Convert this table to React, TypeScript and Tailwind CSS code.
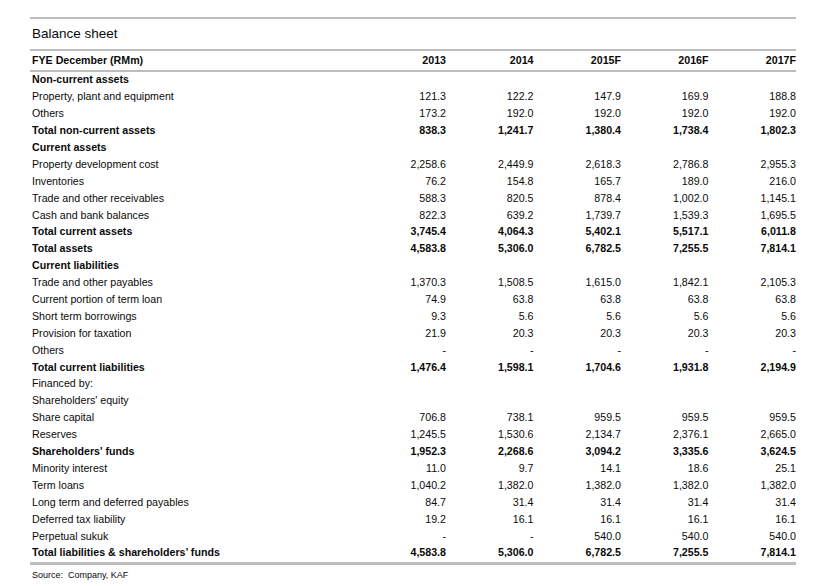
type Row = {
  label: string;
  values?: string[];
  bold?: boolean;
};

const rows: Row[] = [
  { label: 'Non-current assets', bold: true },
  { label: 'Property, plant and equipment', values: ['121.3', '122.2', '147.9', '169.9', '188.8'] },
  { label: 'Others', values: ['173.2', '192.0', '192.0', '192.0', '192.0'] },
  { label: 'Total non-current assets', bold: true, values: ['838.3', '1,241.7', '1,380.4', '1,738.4', '1,802.3'] },
  { label: 'Current assets', bold: true },
  { label: 'Property development cost', values: ['2,258.6', '2,449.9', '2,618.3', '2,786.8', '2,955.3'] },
  { label: 'Inventories', values: ['76.2', '154.8', '165.7', '189.0', '216.0'] },
  { label: 'Trade and other receivables', values: ['588.3', '820.5', '878.4', '1,002.0', '1,145.1'] },
  { label: 'Cash and bank balances', values: ['822.3', '639.2', '1,739.7', '1,539.3', '1,695.5'] },
  { label: 'Total current assets', bold: true, values: ['3,745.4', '4,064.3', '5,402.1', '5,517.1', '6,011.8'] },
  { label: 'Total assets', bold: true, values: ['4,583.8', '5,306.0', '6,782.5', '7,255.5', '7,814.1'] },
  { label: 'Current liabilities', bold: true },
  { label: 'Trade and other payables', values: ['1,370.3', '1,508.5', '1,615.0', '1,842.1', '2,105.3'] },
  { label: 'Current portion of term loan', values: ['74.9', '63.8', '63.8', '63.8', '63.8'] },
  { label: 'Short term borrowings', values: ['9.3', '5.6', '5.6', '5.6', '5.6'] },
  { label: 'Provision for taxation', values: ['21.9', '20.3', '20.3', '20.3', '20.3'] },
  { label: 'Others', values: ['-', '-', '-', '-', '-'] },
  { label: 'Total current liabilities', bold: true, values: ['1,476.4', '1,598.1', '1,704.6', '1,931.8', '2,194.9'] },
  { label: 'Financed by:' },
  { label: "Shareholders' equity" },
  { label: 'Share capital', values: ['706.8', '738.1', '959.5', '959.5', '959.5'] },
  { label: 'Reserves', values: ['1,245.5', '1,530.6', '2,134.7', '2,376.1', '2,665.0'] },
  { label: "Shareholders' funds", bold: true, values: ['1,952.3', '2,268.6', '3,094.2', '3,335.6', '3,624.5'] },
  { label: 'Minority interest', values: ['11.0', '9.7', '14.1', '18.6', '25.1'] },
  { label: 'Term loans', values: ['1,040.2', '1,382.0', '1,382.0', '1,382.0', '1,382.0'] },
  { label: 'Long term and deferred payables', values: ['84.7', '31.4', '31.4', '31.4', '31.4'] },
  { label: 'Deferred tax liability', values: ['19.2', '16.1', '16.1', '16.1', '16.1'] },
  { label: 'Perpetual sukuk', values: ['-', '-', '540.0', '540.0', '540.0'] },
  { label: 'Total liabilities & shareholders\u2019 funds', bold: true, values: ['4,583.8', '5,306.0', '6,782.5', '7,255.5', '7,814.1'] },
];

const years = ['2013', '2014', '2015F', '2016F', '2017F'];

const grid = 'grid grid-cols-[328.5px_repeat(5,87.5px)] items-center';

export default function App() {
  return (
    <div className="min-h-[586px] w-[823px] bg-white pt-[17px] pl-[30px] font-['Liberation_Sans',Arial,sans-serif] text-[#0a0a0a]">
      <div className="w-[766px]">
        <div className="h-[2px] bg-[#bdbdbd]" />
        <div className="flex h-[30px] items-center pl-[2px] pt-[1px] text-[13.5px]">Balance sheet</div>
        <div className="h-[2px] bg-[#bdbdbd]" />

        <div className={`${grid} h-[19px] text-[10.65px] font-bold`}>
          <div className="pl-[2px]">FYE December (RMm)</div>
          {years.map((y) => (
            <div key={y} className="text-right">{y}</div>
          ))}
        </div>
        <div className="h-[2px] bg-[#bdbdbd]" />

        {rows.map((r, i) => (
          <div key={i} className={`${grid} h-[16.9px] text-[10.65px] ${r.bold ? 'font-bold' : ''}`}>
            <div className="pl-[2px] whitespace-nowrap">{r.label}</div>
            {(r.values ?? ['', '', '', '', '']).map((v, j) => (
              <div key={j} className="text-right">{v}</div>
            ))}
          </div>
        ))}
        <div className="h-[3px] bg-[#bdbdbd]" />

        <div className="whitespace-pre pl-[2px] pt-[4px] text-[9px]">Source:  Company, KAF</div>
      </div>
    </div>
  );
}
